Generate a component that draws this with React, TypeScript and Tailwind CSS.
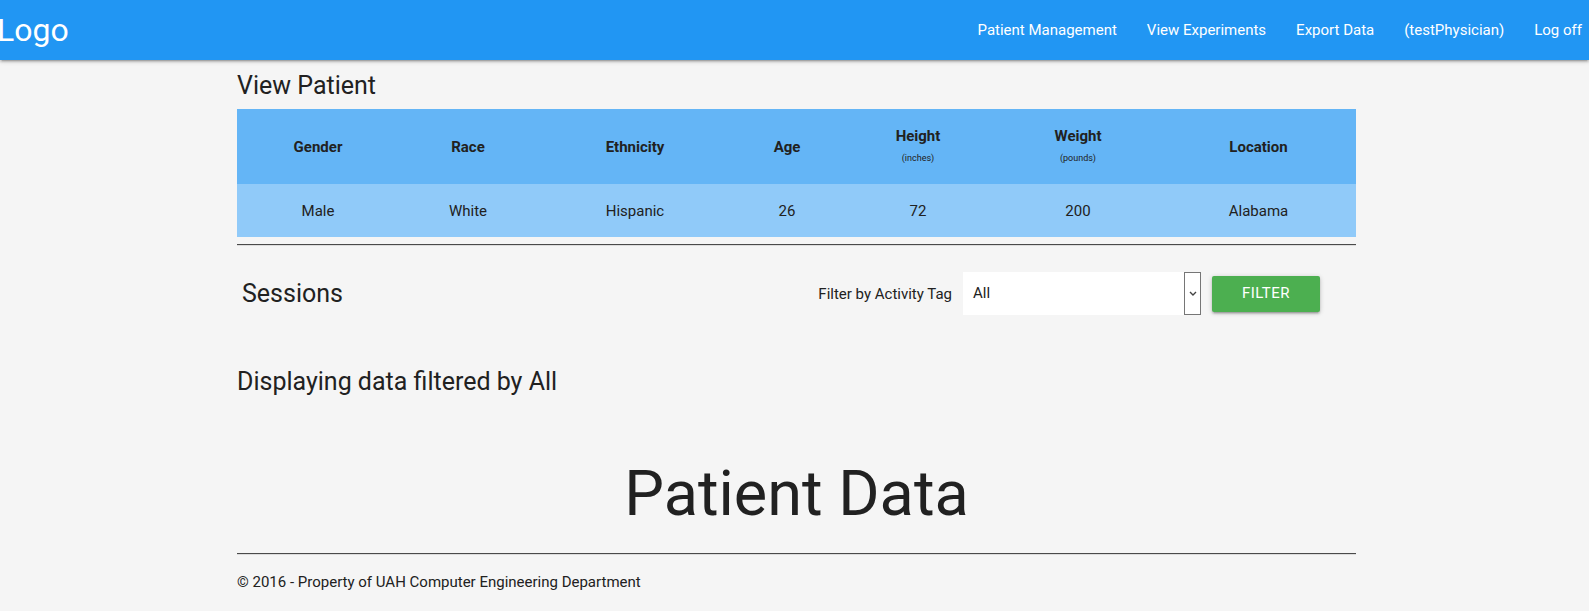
import React from "react";

const columns = [
  { label: "Gender", value: "Male" },
  { label: "Race", value: "White" },
  { label: "Ethnicity", value: "Hispanic" },
  { label: "Age", value: "26" },
  { label: "Height", unit: "(inches)", value: "72" },
  { label: "Weight", unit: "(pounds)", value: "200" },
  { label: "Location", value: "Alabama" },
];

const navLinks = ["Patient Management", "View Experiments", "Export Data", "(testPhysician)", "Log off"];

function Navbar() {
  return (
    <nav className="h-[60px] w-full overflow-hidden bg-[#2196F3] text-white shadow-[0_2px_2px_0_rgba(0,0,0,0.14),0_3px_1px_-2px_rgba(0,0,0,0.12),0_1px_5px_0_rgba(0,0,0,0.2)]">
      <div className="flex h-full items-center justify-between">
        <a className="ml-[-3px] text-[32px] leading-[60px]">Logo</a>
        <ul className="mr-[-8px] flex h-full items-center">
          {navLinks.map((link) => (
            <li key={link}>
              <a className="block px-[15px] text-[15px] leading-[58px]">{link}</a>
            </li>
          ))}
        </ul>
      </div>
    </nav>
  );
}

function PatientTable() {
  return (
    <div className="mt-[8px] grid grid-cols-[162px_138px_196px_108px_154px_166px_195px] text-center text-[15px]">
      {columns.map((col) => (
        <div key={col.label} className="flex h-[75px] flex-col items-center justify-center bg-[#64B5F6] font-bold">
          {col.unit ? (
            <div className="flex flex-col items-center pb-[4px]">
              <span className="leading-[20px]">{col.label}</span>
              <span className="mt-[6px] text-[9px] font-normal leading-[12px]">{col.unit}</span>
            </div>
          ) : (
            <span className="leading-[22px]">{col.label}</span>
          )}
        </div>
      ))}
      {columns.map((col) => (
        <div key={col.label + "-v"} className="flex h-[53px] items-center justify-center bg-[#90CAF9]">
          <span className="leading-[22px]">{col.value}</span>
        </div>
      ))}
    </div>
  );
}

function Divider({ className }: { className: string }) {
  return <div className={"h-[2px] border-t border-b border-t-[#4a4a4a] border-b-[#dcdcdc] " + className} />;
}

function SessionsBar() {
  return (
    <div className="mt-[26px] flex h-[43px] items-center">
      <h5 className="pl-[5px] text-[25px] leading-[30px]">Sessions</h5>
      <div className="ml-auto mr-[36px] flex items-center">
        <label className="text-[15px] leading-[22px]">Filter by Activity Tag</label>
        <div className="ml-[11px] flex h-[43px] w-[238px] bg-white">
          <span className="flex-1 pl-[10px] text-[15px] leading-[43px]">All</span>
          <div className="flex w-[17px] items-center justify-center border border-[#767676]">
            <svg width="8" height="5" viewBox="0 0 8 5" fill="none">
              <path d="M1 1l3 3 3-3" stroke="#444" strokeWidth="1.4" />
            </svg>
          </div>
        </div>
        <button className="ml-[11px] h-[36px] w-[108px] rounded-[2px] bg-[#4CAF50] text-[15px] uppercase tracking-[0.5px] text-white shadow-[0_2px_2px_0_rgba(0,0,0,0.14),0_3px_1px_-2px_rgba(0,0,0,0.12),0_1px_5px_0_rgba(0,0,0,0.2)]">
          Filter
        </button>
      </div>
    </div>
  );
}

export default function App() {
  return (
    <div className="min-h-[611px] bg-[#f5f5f5] font-[Roboto,sans-serif] text-[#212121]">
      <Navbar />
      <main className="ml-[237px] w-[1119px]">
        <h5 className="mt-[11px] text-[25px] leading-[30px]">View Patient</h5>
        <PatientTable />
        <Divider className="mt-[7px]" />
        <SessionsBar />
        <h5 className="mt-[52px] text-[25px] leading-[30px]">Displaying data filtered by All</h5>
        <h1 className="mt-[59px] text-center text-[63px] leading-[76px]">Patient Data</h1>
        <Divider className="mt-[21px]" />
        <footer className="mt-[16px] text-[15px] leading-[22px]">
          © 2016 - Property of UAH Computer Engineering Department
        </footer>
      </main>
    </div>
  );
}
